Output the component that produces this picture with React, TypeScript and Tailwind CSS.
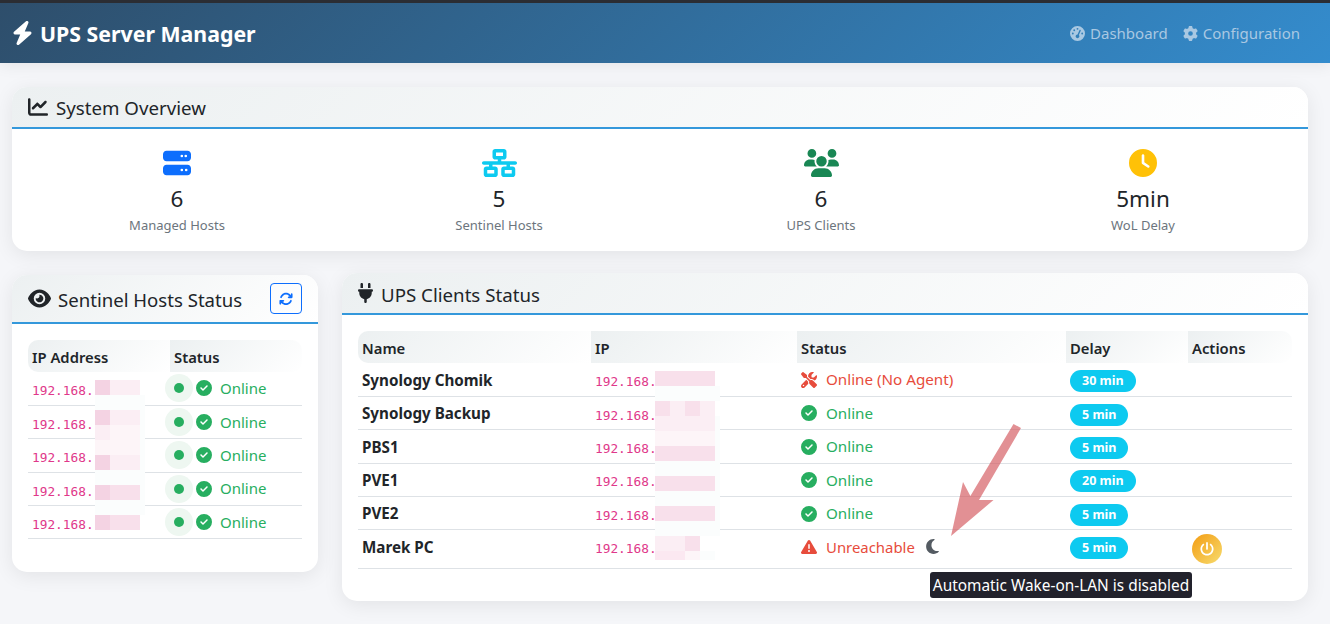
import {
  FaArrowsRotate,
  FaBolt,
  FaChartLine,
  FaCircleCheck,
  FaClock,
  FaEye,
  FaGaugeHigh,
  FaGear,
  FaMoon,
  FaNetworkWired,
  FaPlug,
  FaPowerOff,
  FaScrewdriverWrench,
  FaServer,
  FaTriangleExclamation,
  FaUsers,
} from "react-icons/fa6";

const W = "bg-[#fbfdfd]";
const P1 = "bg-[#f4d3e3]";
const P2 = "bg-[#f8e0eb]";
const P3 = "bg-[#fbeef4]";
const P4 = "bg-[#fdf5f8]";
const P5 = "bg-[#fbe8f1]";
const N = "bg-transparent";

const sentinelMosaic = [
  [P1, P3, P3, N],
  [W, W, W, W],
  [P1, P3, P3, W],
  [P3, P4, P4, W],
  [P4, P4, P4, W],
  [P1, P3, P3, W],
  [W, W, W, W],
  [P1, P2, P2, W],
  [W, W, W, W],
  [P1, P2, P2, N],
];

const clientMosaic = [
  [P2, P2, P2, P2, N],
  [W, W, W, W, W],
  [P2, P3, P2, P3, N],
  [P3, P3, P3, P3, W],
  [P4, P4, P4, P4, W],
  [P2, P2, P2, P2, W],
  [W, W, W, W, W],
  [P2, P2, P2, P2, W],
  [W, W, W, W, W],
  [P2, P2, P2, P2, W],
  [W, W, W, W, W],
  [P3, P3, P2, N, N],
  [P5, P5, P4, W, N],
];

const stats = [
  { icon: <FaServer className="h-[28px] w-[28px] text-[#0d6efd]" />, value: "6", label: "Managed Hosts" },
  { icon: <FaNetworkWired className="h-[28px] w-[35px] text-[#0dcaf0]" />, value: "5", label: "Sentinel Hosts" },
  { icon: <FaUsers className="h-[28px] w-[35px] text-[#198754]" />, value: "6", label: "UPS Clients" },
  { icon: <FaClock className="h-[28px] w-[28px] text-[#ffc107]" />, value: "5min", label: "WoL Delay" },
];

const clients = [
  { name: "Synology Chomik", status: "agent", delay: "30 min" },
  { name: "Synology Backup", status: "online", delay: "5 min" },
  { name: "PBS1", status: "online", delay: "5 min" },
  { name: "PVE1", status: "online", delay: "20 min" },
  { name: "PVE2", status: "online", delay: "5 min" },
  { name: "Marek PC", status: "down", delay: "5 min" },
];

const thClass =
  "h-8 px-1 pt-[2px] text-left align-middle text-[14.8px] font-semibold text-[#212529] bg-[linear-gradient(135deg,#ecf0f1,#ffffff)]";

const Ip = () => (
  <code className="font-['DejaVu_Sans_Mono',monospace] text-[12.8px] text-[#e0388a]">192.168.</code>
);

const Online = ({ gap }: { gap: string }) => (
  <span className={`inline-flex items-center ${gap} text-[#27ae60]`}>
    <FaCircleCheck className="text-[16px]" />
    Online
  </span>
);

const Mosaic = ({ rows, className }: { rows: string[][]; className: string }) => (
  <div className={`absolute ${className}`}>
    {rows.map((row, i) => (
      <div key={i} className="flex h-[15px]">
        {row.map((c, j) => (
          <div key={j} className={`${c} ${j < row.length - 1 ? "w-[15px]" : "w-[5px]"}`} />
        ))}
      </div>
    ))}
  </div>
);

const CardHeader = ({ children }: { children: React.ReactNode }) => (
  <div className="flex items-center border-b-2 border-[#3498db] bg-[linear-gradient(135deg,#ecf0f1,#ffffff)] px-4">
    {children}
  </div>
);

export default function App() {
  return (
    <div className="relative h-[624px] overflow-hidden bg-[#f5f6f9] font-['Noto_Sans',sans-serif] text-[#212529]">
      {/* Navbar */}
      <nav className="flex h-[63px] items-center justify-between border-t-[3px] border-[#2b2d33] bg-[linear-gradient(135deg,#2e4e6b,#348ccd)] pl-3 pr-[30px] shadow-[0_2px_15px_rgba(0,0,0,0.08)]">
        <div className="flex items-center gap-[7px] text-[21.3px] font-bold text-white">
          <FaBolt className="h-[24px] w-[21px]" />
          <span className="pt-[2px]">UPS Server Manager</span>
        </div>
        <div className="flex items-center gap-[15px] text-[15px] text-[#a9c8e2]">
          <span className="flex items-center gap-[5px]">
            <FaGaugeHigh className="text-[15px]" /> Dashboard
          </span>
          <span className="flex items-center gap-[5px]">
            <FaGear className="text-[15px]" /> Configuration
          </span>
        </div>
      </nav>

      <main className="pl-3 pr-[22px] pt-6">
        {/* System Overview */}
        <section className="h-[164px] overflow-hidden rounded-[15px] bg-white shadow-[0_4px_20px_rgba(0,0,0,0.08)]">
          <CardHeader>
            <h5 className="flex h-[40px] items-center gap-2 text-[18.7px]">
              <FaChartLine className="text-[20px]" /> <span className="pt-[2px]">System Overview</span>
            </h5>
          </CardHeader>
          <div className="grid grid-cols-4 px-1 pt-[20px]">
            {stats.map((s) => (
              <div key={s.label} className="flex flex-col items-center">
                <div className="flex h-[28px] items-center">{s.icon}</div>
                <div className="mt-[6px] text-[22.5px] leading-[32px]">{s.value}</div>
                <div className="text-[13px] leading-[20px] text-[#6c757d]">{s.label}</div>
              </div>
            ))}
          </div>
        </section>

        <div className="mt-[22px] flex items-start gap-6">
          {/* Sentinel Hosts */}
          <section className="mt-[2px] h-[297px] w-[306px] shrink-0 overflow-hidden rounded-[15px] bg-white shadow-[0_4px_20px_rgba(0,0,0,0.08)]">
            <CardHeader>
              <div className="flex h-[47px] w-full items-center justify-between">
                <h5 className="flex items-center gap-[7px] text-[18.6px]">
                  <FaEye className="text-[23px]" /> <span className="pt-[3px]">Sentinel Hosts Status</span>
                </h5>
                <button className="flex h-[31px] w-8 items-center justify-center rounded-[4px] border border-[#0d6efd] text-[14px] text-[#0d6efd]">
                  <FaArrowsRotate />
                </button>
              </div>
            </CardHeader>
            <div className="px-4 pt-4">
              <table className="w-full table-fixed border-collapse">
                <thead>
                  <tr>
                    <th className={`${thClass} w-[142px] rounded-l-[10px]`}>IP Address</th>
                    <th className={`${thClass} rounded-r-[10px]`}>Status</th>
                  </tr>
                </thead>
                <tbody>
                  {[0, 1, 2, 3, 4].map((i) => (
                    <tr key={i} className="h-[33.4px] border-b border-[#dee2e6] text-[15px]">
                      <td className="px-1 pt-[2px]">
                        <Ip />
                      </td>
                      <td className="pl-0">
                        <div className="-ml-[5px] flex items-center">
                          <span className="flex h-7 w-7 items-center justify-center rounded-full bg-[#eef7f1]">
                            <span className="h-[10px] w-[10px] rounded-full bg-[#27ae60]" />
                          </span>
                          <span className="ml-[3px] pt-[2px]">
                            <Online gap="gap-[8px]" />
                          </span>
                        </div>
                      </td>
                    </tr>
                  ))}
                </tbody>
              </table>
            </div>
          </section>

          {/* UPS Clients */}
          <section className="h-[328px] flex-1 overflow-hidden rounded-[15px] bg-white shadow-[0_4px_20px_rgba(0,0,0,0.08)]">
            <CardHeader>
              <h5 className="flex h-[40px] items-center gap-2 text-[18.7px]">
                <FaPlug className="h-[20px] w-[15px]" /> <span className="pt-[5px]">UPS Clients Status</span>
              </h5>
            </CardHeader>
            <div className="px-4 pt-4">
              <table className="w-full table-fixed border-collapse">
                <thead>
                  <tr>
                    <th className={`${thClass} w-[233px] rounded-l-[10px]`}>Name</th>
                    <th className={`${thClass} w-[206px]`}>IP</th>
                    <th className={`${thClass} w-[269px]`}>Status</th>
                    <th className={`${thClass} w-[122px]`}>Delay</th>
                    <th className={`${thClass} rounded-r-[10px]`}>Actions</th>
                  </tr>
                </thead>
                <tbody>
                  {clients.map((c) => {
                    const down = c.status === "down";
                    return (
                      <tr
                        key={c.name}
                        className={`${down ? "h-[38.5px]" : "h-[33.4px]"} border-b border-[#dee2e6] text-[15.2px]`}
                      >
                        <td className={`px-1 font-bold ${down ? "pb-[3px]" : "pt-[1px]"}`}>{c.name}</td>
                        <td className={`px-1 ${down ? "pb-[4px]" : "pt-[2px]"}`}>
                          <Ip />
                        </td>
                        <td className={`px-1 ${down ? "pb-[2px]" : "pt-[3px]"}`}>
                          {c.status === "online" && <Online gap="gap-[9px]" />}
                          {c.status === "agent" && (
                            <span className="inline-flex items-center gap-[9px] text-[#e74c3c]">
                              <FaScrewdriverWrench className="text-[16px]" />
                              Online (No Agent)
                            </span>
                          )}
                          {down && (
                            <span className="inline-flex items-center gap-[9px] text-[14.9px] text-[#e74c3c]">
                              <FaTriangleExclamation className="text-[16px]" />
                              Unreachable
                              <FaMoon className="ml-[2px] h-[17px] w-[13px] text-[#545b62]" />
                            </span>
                          )}
                        </td>
                        <td className={`px-1 ${down ? "pb-[5px]" : "pt-[1px]"}`}>
                          <span className="inline-block rounded-full bg-[#0dcaf0] px-[12px] py-[3px] text-[12.5px] font-bold leading-[16px] text-white">
                            {c.delay}
                          </span>
                        </td>
                        <td className="px-1">
                          {down && (
                            <button className="flex h-[30px] w-[30px] items-center justify-center rounded-full bg-[linear-gradient(135deg,#f39c12,#f7dc6f)] text-[14px] text-white">
                              <FaPowerOff />
                            </button>
                          )}
                        </td>
                      </tr>
                    );
                  })}
                </tbody>
              </table>
            </div>
          </section>
        </div>
      </main>

      {/* Blurred parts of the addresses */}
      <Mosaic rows={sentinelMosaic} className="left-[95px] top-[380px]" />
      <Mosaic rows={clientMosaic} className="left-[655px] top-[371px] [&>div:last-child]:h-[9px]" />

      {/* Screenshot annotation */}
      <svg className="absolute left-[940px] top-[415px]" width="90" height="130" viewBox="940 415 90 130">
        <polygon
          points="1013.5,424 1021,428 979,500 993.5,500 951,536 963,482 970.4,496"
          fill="#d2555a"
          fillOpacity="0.65"
        />
      </svg>

      {/* Tooltip */}
      <div className="absolute left-[930px] top-[572px] flex h-[26px] w-[262px] items-center justify-center rounded-[3px] bg-[#22222c] pt-[2px] text-[15.4px] text-white">
        Automatic Wake-on-LAN is disabled
      </div>
    </div>
  );
}
